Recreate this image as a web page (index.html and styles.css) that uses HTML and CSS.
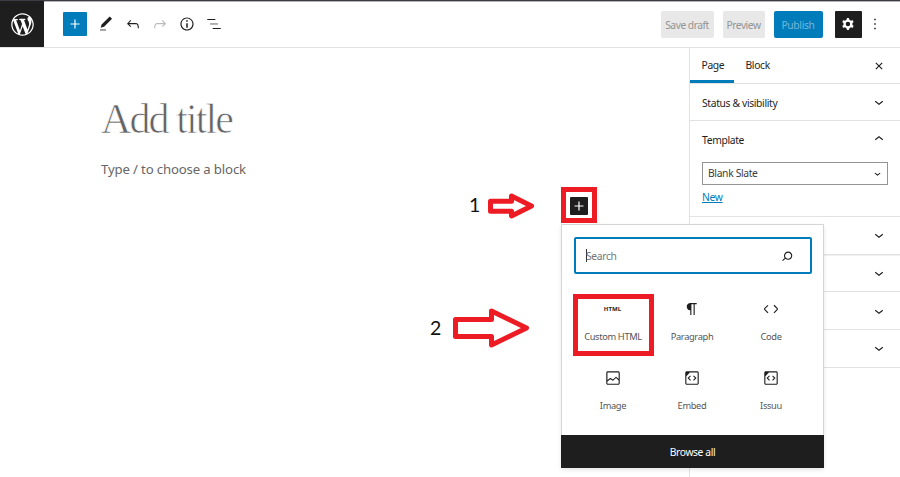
FILE: index.html
```html
<!DOCTYPE html>
<html lang="en">
<head>
<meta charset="utf-8">
<title>Add title</title>
<link rel="stylesheet" href="styles.css">
</head>
<body>
<svg class="defs" aria-hidden="true">
  <symbol id="plus" viewBox="0 0 24 24"><path d="M18 11.2h-5.2V6h-1.6v5.2H6v1.6h5.2V18h1.6v-5.2H18z"/></symbol>
  <symbol id="down" viewBox="0 0 24 24"><path d="M17.5 11.6L12 16l-5.5-4.4.9-1.2L12 14l4.5-3.6 1 1.2z"/></symbol>
  <symbol id="up" viewBox="0 0 24 24"><path d="M6.5 12.4L12 8l5.5 4.4-.9 1.2L12 10l-4.5 3.6-1-1.2z"/></symbol>
  <symbol id="embed" viewBox="0 0 24 24"><path d="M19 3H5c-1.1 0-2 .9-2 2v14c0 1.1.9 2 2 2h14c1.1 0 2-.9 2-2V5c0-1.1-.9-2-2-2zm.5 16c0 .3-.2.5-.5.5H5c-.3 0-.5-.2-.5-.5V9.800l4.700-5.300H19c.3 0 .5.2.5.5v14zm-6-9.500L16 12l-2.500 2.800 1.100 1L18 12l-3.500-3.500-1 1zm-3 0l-1-1L6 12l3.500 3.800 1.100-1L8 12l2.500-2.500z"/></symbol>
</svg>
<div class="app">
  <header class="header">
    <div class="logo"><svg viewBox="-2 -2 24 24"><path d="M20 10c0-5.51-4.49-10-10-10C4.48 0 0 4.49 0 10c0 5.52 4.48 10 10 10 5.51 0 10-4.48 10-10zM7.78 15.37L4.37 6.22c.55-.02 1.17-.08 1.17-.08.5-.06.44-1.13-.06-1.11 0 0-1.45.11-2.37.11-.18 0-.37 0-.58-.01C4.12 2.69 6.87 1.11 10 1.11c2.33 0 4.45.87 6.05 2.34-.68-.11-1.65.39-1.65 1.58 0 .74.45 1.36.9 2.1.35.61.55 1.36.55 2.46 0 1.49-1.4 5-1.4 5l-3.03-8.37c.54-.02.82-.17.82-.17.5-.05.44-1.25-.06-1.22 0 0-1.44.12-2.38.12-.87 0-2.33-.12-2.33-.12-.5-.03-.56 1.2-.06 1.22l.92.08 1.26 3.41zM17.41 10c.24-.64.74-1.87.43-4.25.7 1.29 1.05 2.71 1.05 4.25 0 3.29-1.73 6.24-4.4 7.78.97-2.59 1.94-5.2 2.92-7.78zM6.1 18.09C3.12 16.65 1.11 13.53 1.11 10c0-1.3.23-2.48.72-3.59C3.25 10.3 4.67 14.2 6.1 18.09zm4.03-6.63l2.58 6.98c-.86.29-1.76.45-2.71.45-.79 0-1.57-.11-2.29-.33.81-2.38 1.62-4.74 2.42-7.1z"/></svg></div>
    <div class="tools">
      <button class="add"><svg class="icon"><use href="#plus"/></svg></button>
      <svg class="icon" viewBox="0 0 24 24"><path d="M20.1 5.1L16.9 2 6.2 12.7l-1.3 4.4 4.5-1.3L20.1 5.1z"/><path class="muted" d="M4 20.8h8v-1.8H4v1.8z"/></svg>
      <svg class="icon" viewBox="0 0 24 24"><path d="M18.3 11.7c-.6-.6-1.4-.9-2.3-.9H6.7l2.9-3.3-1.1-1-4.5 5L8.5 16l1-1-2.7-2.7H16c.5 0 .9.2 1.3.5 1 1 1 3.4 1 4.5v.3h1.5v-.2c0-1.5 0-4.3-1.5-5.7z"/></svg>
      <svg class="icon disabled" viewBox="0 0 24 24"><path d="M15.6 6.5l-1.1 1 2.9 3.3H8c-.9 0-1.7.3-2.3.9-1.4 1.5-1.4 4.2-1.4 5.6v.2h1.5v-.3c0-1.1 0-3.5 1-4.5.3-.3.7-.5 1.3-.5h9.2L14.5 15l1.1 1.1 4.6-4.6-4.6-5z"/></svg>
      <svg class="icon" viewBox="0 0 24 24"><path d="M12 3.2c-4.8 0-8.8 3.9-8.8 8.8 0 4.8 3.9 8.8 8.8 8.8 4.8 0 8.8-3.9 8.8-8.8 0-4.8-4-8.8-8.8-8.8zm0 16c-4 0-7.2-3.3-7.2-7.2C4.8 8 8 4.8 12 4.8s7.2 3.3 7.2 7.2c0 4-3.2 7.2-7.2 7.2zM11 17h2v-6h-2v6zm0-8h2V7h-2v2z"/></svg>
      <svg class="icon" viewBox="0 0 24 24"><path d="M13.8 5.2H3v1.5h10.8V5.2zm-3.6 12v1.5H21v-1.5H10.2z"/><path class="muted" d="M17.4 11.2H6.6v1.5h10.8v-1.5z"/></svg>
    </div>
    <div class="actions">
      <button class="btn save">Save draft</button>
      <button class="btn preview">Preview</button>
      <button class="btn publish">Publish</button>
      <button class="cog"><svg class="icon" viewBox="0 0 24 24"><path fill-rule="evenodd" d="M10.289 4.836A1 1 0 0111.275 4h1.306a1 1 0 01.987.836l.244 1.466c.787.26 1.503.679 2.108 1.218l1.393-.522a1 1 0 011.216.437l.653 1.13a1 1 0 01-.23 1.273l-1.148.944a6.025 6.025 0 010 2.435l1.149.946a1 1 0 01.23 1.272l-.653 1.13a1 1 0 01-1.216.437l-1.394-.522c-.605.54-1.32.958-2.108 1.218l-.244 1.466a1 1 0 01-.987.836h-1.306a1 1 0 01-.986-.836l-.244-1.466a5.995 5.995 0 01-2.108-1.218l-1.394.522a1 1 0 01-1.217-.436l-.653-1.131a1 1 0 01.23-1.272l1.149-.946a6.026 6.026 0 010-2.435l-1.148-.944a1 1 0 01-.23-1.272l.653-1.131a1 1 0 011.217-.437l1.393.522a5.994 5.994 0 012.108-1.218l.244-1.466zM14.929 12a3 3 0 11-6 0 3 3 0 016 0z"/></svg></button>
      <svg class="icon more" viewBox="0 0 24 24"><path d="M13 19h-2v-2h2v2zm0-6h-2v-2h2v2zm0-6h-2V5h2v2z"/></svg>
    </div>
  </header>
  <div class="body">
    <main class="canvas">
      <h1 class="title">Add title</h1>
      <p class="prompt">Type / to choose a block</p>
    </main>
    <aside class="sidebar">
      <div class="tabs">
        <span class="tab active">Page</span><span class="tab">Block</span>
        <svg class="icon close" viewBox="0 0 24 24"><path d="M12 13.06l3.712 3.713 1.061-1.06L13.061 12l3.712-3.712-1.06-1.06L12 10.938 8.288 7.227l-1.061 1.06L10.939 12l-3.712 3.712 1.06 1.061L12 13.061z"/></svg>
      </div>
      <section class="panel"><div class="row status"><span class="name">Status &amp; visibility</span><svg class="icon"><use href="#down"/></svg></div></section>
      <section class="panel template">
        <div class="row"><span class="name">Template</span><svg class="icon"><use href="#up"/></svg></div>
        <div class="select"><span>Blank Slate</span><svg class="caret"><use href="#down"/></svg></div>
        <a class="new">New</a>
      </section>
      <section class="panel thick"><div class="row"><svg class="icon"><use href="#down"/></svg></div></section>
      <section class="panel"><div class="row"><svg class="icon"><use href="#down"/></svg></div></section>
      <section class="panel"><div class="row"><svg class="icon"><use href="#down"/></svg></div></section>
      <section class="panel"><div class="row"><svg class="icon"><use href="#down"/></svg></div></section>
    </aside>
  </div>

  <div class="popover">
    <div class="search"><i class="cursor"></i><span>Search</span><svg class="icon" viewBox="0 0 24 24"><path d="M13.5 6C10.5 6 8 8.5 8 11.5c0 1.1.3 2.1.9 3l-3.4 3 1 1.1 3.4-2.9c1 .9 2.2 1.4 3.6 1.4 3 0 5.5-2.5 5.5-5.5C19 8.5 16.5 6 13.5 6zm0 9.5c-2.2 0-4-1.8-4-4s1.8-4 4-4 4 1.8 4 4-1.8 4-4 4z"/></svg></div>
    <div class="blocks">
      <div class="block"><b class="html">HTML</b><span>Custom HTML</span></div>
      <div class="block"><svg class="icon" viewBox="0 0 24 24"><path d="M18.3 4H9.9v-.1l-.9.2c-2.3.4-4 2.4-4 4.8s1.7 4.4 4 4.8l.7.1V20h1.5V5.5h2.9V20h1.5V5.5h2.7V4z"/></svg><span>Paragraph</span></div>
      <div class="block"><svg class="icon" viewBox="0 0 24 24"><path d="M20.8 10.7l-4.3-4.3-1.1 1.1 4.3 4.3c.1.1.1.3 0 .4l-4.3 4.3 1.1 1.1 4.3-4.3c.7-.8.7-1.9 0-2.6zM4.2 11.8l4.3-4.3-1-1-4.3 4.3c-.7.7-.7 1.8 0 2.5l4.3 4.3 1.1-1.1-4.3-4.3c-.2-.1-.2-.3-.1-.4z"/></svg><span>Code</span></div>
      <div class="block"><svg class="icon" viewBox="0 0 24 24"><path d="M19 3H5c-1.1 0-2 .9-2 2v14c0 1.1.9 2 2 2h14c1.1 0 2-.9 2-2V5c0-1.1-.9-2-2-2zM5 4.5h14c.3 0 .5.2.5.5v8.4l-3-2.9c-.3-.3-.8-.3-1 0L11.9 14 9 12c-.3-.2-.6-.2-.8 0l-3.6 2.6V5c-.1-.3.1-.5.4-.5zm14 15H5c-.3 0-.5-.2-.5-.5v-2.4l4.1-3 3 1.9c.3.2.7.2.9-.1L16 12l3.5 3.4V19c0 .3-.2.5-.5.5z"/></svg><span>Image</span></div>
      <div class="block"><svg class="icon"><use href="#embed"/></svg><span>Embed</span></div>
      <div class="block"><svg class="icon"><use href="#embed"/></svg><span>Issuu</span></div>
    </div>
    <button class="browse">Browse all</button>
  </div>

  <div class="inserter"><span><svg class="icon"><use href="#plus"/></svg></span></div>
  <div class="highlight"></div>
  <span class="step one">1</span>
  <span class="step two">2</span>
  <svg class="arrow first" viewBox="0 0 47 28"><path d="M2.500 9.200H23.500V4L43.500 14L23.500 24V19.200H2.500Z"/></svg>
  <svg class="arrow second" viewBox="0 0 77 42"><path d="M2.500 12.500H38.500V4L73.500 21L38.500 38V29.500H2.500Z"/></svg>
</div>
</body>
</html>
```

FILE: styles.css
```css
* { box-sizing: border-box; }
body { margin: 0; font-family: "Noto Sans", "Open Sans", sans-serif; font-size: 10.300px; letter-spacing: -.340px; color: #1e1e1e; background: #fff; }
button { font: inherit; letter-spacing: inherit; border: 0; padding: 0; margin: 0; }
.defs { position: absolute; width: 0; height: 0; }
.app { position: relative; width: 900px; height: 477px; overflow: hidden; display: flex; flex-direction: column; }
.icon { width: 18px; height: 18px; fill: currentColor; flex: none; display: block; }
.muted { opacity: .6; }

.header { height: 48px; border-top: 1px solid #3c3c43; border-bottom: 1px solid #e2e2e2; display: flex; box-shadow: inset 0 1px #b5b5b9; flex: none; }
.logo { width: 44px; height: 46px; background: #1e1e1e; color: #fff; display: flex; align-items: center; justify-content: center; }
.logo svg { width: 27px; height: 27px; fill: #fff; }
.tools { display: flex; align-items: center; gap: 9px; padding-left: 18.500px; flex: 1; }
.add { width: 24px; height: 24px; margin-right: 1.500px; border-radius: 1px; background: #007cba; color: #fff; display: flex; align-items: center; justify-content: center; }
.disabled { color: #bbb; }
.actions { display: flex; align-items: center; padding-right: 16.500px; }
.btn { height: 27px; border-radius: 2px; background: #e8e8e8; color: #949494; white-space: nowrap; padding-top: 1px; }
.save { width: 53px; margin-right: 9px; letter-spacing: -.500px; }
.preview { width: 42px; margin-right: 9px; letter-spacing: -.500px; }
.publish { width: 49px; margin-right: 12px; background: #007cba; color: #73b8dc; }
.cog { width: 27px; height: 27px; border-radius: 1px; background: #1e1e1e; color: #fff; display: flex; align-items: center; justify-content: center; margin-right: 4px; }

.body { flex: 1; display: flex; }
.canvas { flex: 1; padding: 47px 0 0 101px; }
.title { margin: 0; font: 400 42px/48px "Liberation Serif", serif; letter-spacing: -1.920px; color: #646464; -webkit-text-stroke: .7px #fff; white-space: nowrap; }
.prompt { margin: 16px 0 0; font-size: 13.200px; letter-spacing: -.150px; line-height: 20px; color: #666; }
.sidebar { width: 211px; border-left: 1px solid #e2e2e2; }
.tabs { height: 36px; display: flex; align-items: center; border-bottom: 1px solid #e2e2e2; }
.tab { height: 35px; line-height: 35px; padding: 0 11.500px; }
.active { box-shadow: inset 0 -3px #007cba; width: 44px; }
.close { margin-left: auto; margin-right: 12px; }
.panel { border-bottom: 1px solid #e2e2e2; }
.row { height: 36.700px; padding: 0 12px 0 12px; display: flex; align-items: center; justify-content: space-between; }
.row .icon { margin-left: auto; }
.row.status { height: 36px; }
.name { padding-top: 1px; }
.template { height: 96px; }
.thick { box-shadow: 0 1px #f0f0f0; }
.select { height: 23px; margin: 4px 12px 0 12px; border: 1px solid #949494; padding: 0 3px 0 5px; display: flex; align-items: center; justify-content: space-between; color: #3c3c3c; }
.caret { width: 13px; height: 13px; }
.new { display: block; margin: 5px 0 0 12px; line-height: 14px; color: #007cba; text-decoration: underline; }

.popover { position: absolute; left: 561px; top: 224px; width: 263px; height: 244px; background: #fff; border: 1px solid #d5d5d5; border-bottom: 0; box-shadow: 0 2px 4px rgba(0,0,0,.1); display: flex; flex-direction: column; border-radius: 1px; }
.search { height: 37px; margin: 12px 11px 0 12px; border: 2px solid #007cba; border-radius: 2px; padding: 0 14px 0 10px; display: flex; align-items: center; color: #757575; flex: none; }
.search .icon { margin-left: auto; color: #1e1e1e; }
.cursor { width: 1px; height: 13px; background: #333; margin-right: -1px; }
.blocks { display: grid; grid-template-columns: repeat(3, 79px); grid-auto-rows: 69px; padding: 18px 0 0 11px; flex: 1; }
.block { display: flex; flex-direction: column; align-items: center; padding-top: 8px; color: #1e1e1e; }
.block span { margin-top: 12px; padding-left: 1px; line-height: 14px; color: #555; font-size: 9.300px; letter-spacing: -.350px; white-space: nowrap; }
.html { height: 18px; line-height: 19px; font-size: 6px; letter-spacing: .1px; }
.browse { height: 33px; margin: 0 -1px; background: #1e1e1e; color: #fff; flex: none; padding-top: 1px; letter-spacing: -.400px; }

.inserter { position: absolute; left: 561px; top: 187px; width: 36px; height: 36px; border: 5px solid #ed1c24; padding: 5px 4px; }
.inserter span { width: 18px; height: 18px; background: #1e1e1e; color: #fff; display: block; border-radius: 1px; }
.highlight { position: absolute; left: 573px; top: 294px; width: 81px; height: 62px; border: 5px solid #ed1c24; }
.step { position: absolute; font-family: Lato, sans-serif; font-size: 19.500px; line-height: 24px; color: #111; }
.one { left: 469px; top: 193px; }
.two { left: 430px; top: 316px; }
.arrow { position: absolute; fill: none; stroke: #ed1c24; stroke-width: 5px; stroke-linejoin: round; }
.first { left: 488px; top: 192px; width: 47px; height: 28px; }
.second { left: 453px; top: 307px; width: 77px; height: 42px; }
```
